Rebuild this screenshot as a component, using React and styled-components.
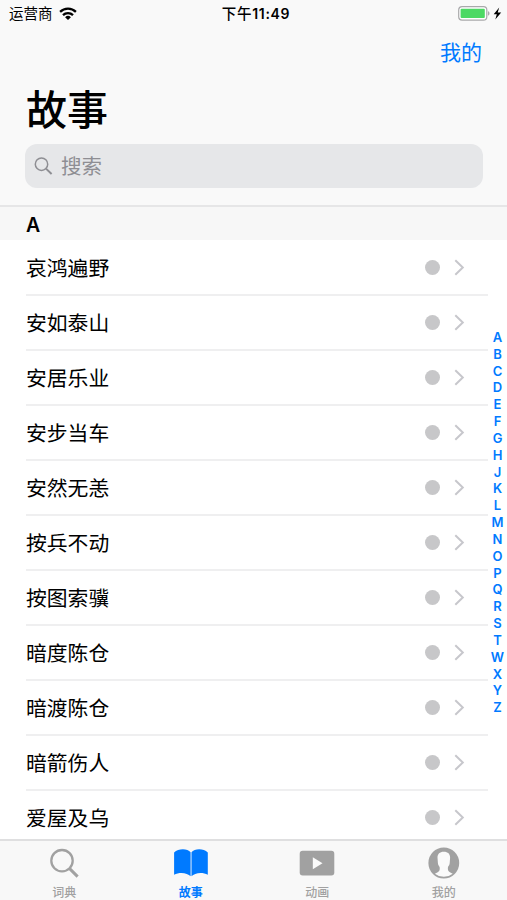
import React, { useState } from "react";
import styled, { createGlobalStyle } from "styled-components";

const stories = [
    "哀鸿遍野",
    "安如泰山",
    "安居乐业",
    "安步当车",
    "安然无恙",
    "按兵不动",
    "按图索骥",
    "暗度陈仓",
    "暗渡陈仓",
    "暗箭伤人",
    "爱屋及乌",
];

const letters = "ABCDEFGHJKLMNOPQRSTWXYZ".split("");

// Icons
const WifiIcon = () => (
    <svg width="18" height="14" viewBox="0 0 18 14" fill="none" stroke="#000" strokeWidth="2.3">
        <path d="M1.1 4.9a11.3 11.3 0 0 1 15.8 0" />
        <path d="M4 8.1a7.1 7.1 0 0 1 10 0" />
        <path d="M9 12.9 6.1 10.2a4.2 4.2 0 0 1 5.8 0z" fill="#000" stroke="none" />
    </svg>
);

const BatteryIcon = () => (
    <svg width="44" height="16" viewBox="0 0 44 16">
        <rect x="0.7" y="0.7" width="28.1" height="13.4" rx="3.4" fill="#fff" stroke="#a9a9ab" strokeWidth="1.2" />
        <rect x="2.6" y="2.7" width="24.2" height="9.3" rx="1" fill="#4cd964" />
        <path d="M30 5.3c2 .5 2 3.9 0 4.400z" fill="#a9a9ab" />
        <path d="M41.2 1.500 35.700 8.300h3.100l-1.500 5.200 5.900-7h-3.500z" fill="#000" />
    </svg>
);

const SmallSearchIcon = () => (
    <svg width="19" height="19" viewBox="0 0 19 19" fill="none" stroke="#8e8e93">
        <circle cx="7.5" cy="7.2" r="6.2" strokeWidth="1.5" />
        <path d="m12 11.6 5.6 5.4" strokeWidth="2" />
    </svg>
);

const ChevronIcon = () => (
    <svg width="11" height="17" viewBox="0 0 11 17" fill="none" stroke="#c7c7cc" strokeWidth="2">
        <path d="m1.3 1.2 7.5 7.3-7.5 7.3" />
    </svg>
);

const SearchIcon = () => (
    <svg width="36" height="34" viewBox="0 0 36 34" fill="none" stroke="currentColor">
        <circle cx="16" cy="14.7" r="10.7" strokeWidth="2.3" />
        <path d="m23.6 22.6 8 8" strokeWidth="3" />
    </svg>
);

const BookIcon = () => (
    <svg width="36" height="34" viewBox="0 0 36 34" fill="currentColor">
        <path d="M17.6 30.3c-3.1-3.7-11.2-4.6-16.5-1.6V6.5c4.4-4.5 13.5-4.3 16.5-.2z" />
        <path d="M18.5 30.3c3.1-3.7 11-4.6 16.3-1.6V6.5c-4.3-4.5-13.3-4.3-16.3-.2z" />
    </svg>
);

const VideoIcon = () => (
    <svg width="36" height="34" viewBox="0 0 36 34">
        <rect x="0.7" y="4.7" width="34.6" height="24.9" rx="3" fill="currentColor" />
        <path d="M13.8 11.3v12l9.7-6z" fill="#fafafa" />
    </svg>
);

const UserIcon = () => (
    <svg width="36" height="34" viewBox="0 0 36 34">
        <circle cx="17.8" cy="17" r="15.4" fill="currentColor" />
        <path
            d="M17.8 5.7c-4.3 0-6.4 2.5-6.3 6l.4 5.2c.1 1.7.9 2.7 1.7 4 .4 2.7 0 4.3-1.9 5.300l-2.800 1.500a14.100 14.100 0 0 0 17.800 0l-2.800-1.500c-1.900-1-2.300-2.600-1.900-5.300.8-1.300 1.600-2.300 1.700-4l.4-5.200c.1-3.500-2-6-6.300-6z"
            fill="#fafafa"
        />
    </svg>
);

const tabs = [
    { name: "词典", icon: SearchIcon },
    { name: "故事", icon: BookIcon },
    { name: "动画", icon: VideoIcon },
    { name: "我的", icon: UserIcon },
];

const App = () => {
    const [activeTab, setActiveTab] = useState("故事");

    return (
        <>
            <GlobalStyle />
            <Screen>
                <Header>
                    <StatusBar>
                        <Carrier>
                            运营商
                            <WifiIcon />
                        </Carrier>
                        <Time>
                            <Period>下午</Period>11:49
                        </Time>
                        <Battery>
                            <BatteryIcon />
                        </Battery>
                    </StatusBar>
                    <NavBar>
                        <NavButton>我的</NavButton>
                    </NavBar>
                    <Title>故事</Title>
                    <SearchField>
                        <SmallSearchIcon />
                        <SearchInput placeholder="搜索" />
                    </SearchField>
                </Header>

                <Content>
                    <List>
                        <SectionHeader>A</SectionHeader>
                        {stories.map((story) => (
                            <Row key={story}>
                                <RowTitle>{story}</RowTitle>
                                <Dot />
                                <ChevronIcon />
                            </Row>
                        ))}
                    </List>
                    <LetterIndex>
                        {letters.map((letter) => (
                            <Letter key={letter}>{letter}</Letter>
                        ))}
                    </LetterIndex>
                </Content>

                <TabBar>
                    {tabs.map(({ name, icon: Icon }) => (
                        <Tab key={name} $active={name === activeTab} onClick={() => setActiveTab(name)}>
                            <Icon />
                            <TabLabel $active={name === activeTab}>{name}</TabLabel>
                        </Tab>
                    ))}
                </TabBar>
            </Screen>
        </>
    );
};


// Styled components
const GlobalStyle = createGlobalStyle`
  body {
    margin: 0;
    background-color: white;
    font-family: Inter, "Noto Sans CJK SC", sans-serif;
  }
  * {
    box-sizing: border-box;
  }
  svg {
    display: block;
    flex-shrink: 0;
  }
`;
const Screen = styled.div`
  display: flex;
  flex-direction: column;
  width: 507px;
  height: 900px;
  overflow: hidden;
  color: #000;
`;
const Header = styled.header`
  height: 207px;
  flex-shrink: 0;
  background-color: #f9f9f9;
  border-bottom: 2px solid #e6e6e7;
`;
const StatusBar = styled.div`
  display: grid;
  grid-template-columns: 1fr auto 1fr;
  align-items: center;
  height: 27px;
  padding: 0 5px 0 9px;
  font-size: 14.5px;
  line-height: 27px;
`;
const Carrier = styled.div`
  display: flex;
  align-items: center;
  gap: 6px;
`;
const Time = styled.div`
  padding-left: 1px;
  font-size: 14px;
  font-weight: 600;
  letter-spacing: 0.7px;
`;
const Period = styled.span`
  font-size: 14.5px;
  font-weight: 500;
`;
const Battery = styled.div`
  display: flex;
  justify-content: flex-end;
`;
const NavBar = styled.div`
  display: flex;
  justify-content: flex-end;
  align-items: center;
  height: 52px;
  padding-right: 25px;
`;
const NavButton = styled.button`
  padding: 0;
  border: none;
  background: none;
  color: #007aff;
  font-family: inherit;
  font-size: 21px;
  line-height: 50px;
`;
const Title = styled.h1`
  height: 65px;
  margin: 0;
  padding-left: 26px;
  font-size: 41px;
  font-weight: 500;
  line-height: 62px;
`;
const SearchField = styled.label`
  display: flex;
  align-items: center;
  gap: 8px;
  height: 44px;
  margin: 0 24px 0 25px;
  padding-left: 9px;
  border-radius: 12px;
  background-color: #e6e7e9;
`;
const SearchInput = styled.input`
  flex: 1;
  height: 44px;
  padding: 0;
  border: none;
  outline: none;
  background: none;
  font-family: inherit;
  font-size: 20.5px;
  &::placeholder {
    color: #8e8e93;
  }
`;
const Content = styled.main`
  position: relative;
  flex: 1;
  min-height: 0;
`;
const List = styled.div`
  height: 100%;
  overflow: hidden;
`;
const SectionHeader = styled.div`
  height: 33px;
  padding-left: 26px;
  background-color: #f7f7f7;
  font-size: 19.5px;
  font-weight: 600;
  line-height: 36px;
`;
const Row = styled.div`
  display: flex;
  align-items: center;
  height: 55px;
  margin: 0 19px 0 26px;
  padding-right: 23px;
  border-bottom: 2px solid #efeff0;
  &:nth-child(2) {
    height: 56px;
  }
`;
const RowTitle = styled.div`
  flex: 1;
  padding-top: 3px;
  font-size: 20.8px;
  line-height: 50px;
`;
const Dot = styled.div`
  width: 15px;
  height: 15px;
  margin-right: 14px;
  border-radius: 50%;
  background-color: #c7c7c9;
`;
/* floats over the right edge of the list */
const LetterIndex = styled.div`
  position: absolute;
  top: 122px;
  right: 0;
  display: flex;
  flex-direction: column;
  width: 19px;
`;
const Letter = styled.span`
  height: 16.84px;
  color: #007aff;
  font-size: 13px;
  font-weight: 600;
  line-height: 16.84px;
  text-align: center;
`;
const TabBar = styled.nav`
  display: grid;
  grid-template-columns: repeat(4, 1fr);
  height: 61px;
  flex-shrink: 0;
  padding-left: 1px;
  border-top: 2px solid #dfdfe0;
  background-color: #f8f8f8;
`;
const Tab = styled.button`
  display: flex;
  flex-direction: column;
  align-items: center;
  padding: 5px 0 0;
  border: none;
  background: none;
  color: ${props => props.$active ? '#007aff' : '#a1a1a1'};
  font-family: inherit;
`;
const TabLabel = styled.span`
  font-size: 12px;
  font-weight: ${props => props.$active ? 700 : 500};
  line-height: 25px;
`;


export default App;
